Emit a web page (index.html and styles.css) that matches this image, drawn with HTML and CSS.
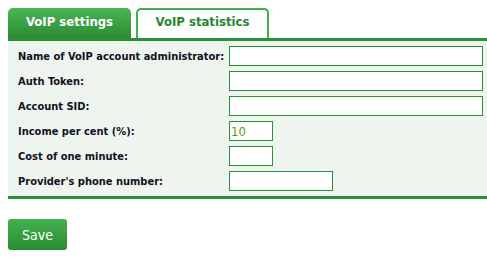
FILE: index.html
```html
<!DOCTYPE html>
<html lang="en">
<head>
  <meta charset="UTF-8" />
  <title>VoIP settings</title>
  <link rel="stylesheet" href="styles.css">
</head>
<body>

  <!-- TABS -->
  <div class="tabs">
    <div class="tab active">VoIP settings</div>
    <div class="tab">VoIP statistics</div>
  </div>

  <!-- SETTINGS FORM -->
  <div class="panel">
    <label class="row">
      <span class="label">Name of VoIP account administrator:</span>
      <input type="text" class="field wide">
    </label>
    <label class="row">
      <span class="label">Auth Token:</span>
      <input type="text" class="field wide">
    </label>
    <label class="row">
      <span class="label">Account SID:</span>
      <input type="text" class="field wide">
    </label>
    <label class="row">
      <span class="label">Income per cent (%):</span>
      <input type="text" class="field small" value="10">
    </label>
    <label class="row">
      <span class="label">Cost of one minute:</span>
      <input type="text" class="field small">
    </label>
    <label class="row">
      <span class="label">Provider's phone number:</span>
      <input type="text" class="field medium">
    </label>
  </div>

  <button class="save">Save</button>

</body>
</html>
```

FILE: styles.css
```css
body {
  margin: 8px 0 8px 8px;
  font-family: "DejaVu Sans Condensed", "DejaVu Sans", sans-serif;
  background: #fff;
}

/* TABS */
.tabs {
  display: flex;
  gap: 5px;
}

.tab {
  box-sizing: border-box;
  height: 30px;
  padding-top: 6px;
  text-align: center;
  font-size: 13px;
  font-weight: bold;
  border-radius: 5px 5px 0 0;
}

.tab.active {
  width: 123px;
  color: #fff;
  background: linear-gradient(#4bb554, #2a8c31);
}

.tab:not(.active) {
  width: 133px;
  color: #23882e;
  background: #fff;
  border: 2px solid #3fb04b;
  border-bottom: none;
  padding-top: 4px;
}

/* FORM PANEL */
.panel {
  background: #eef5ee;
  border-top: 3px solid #2a9136;
  border-bottom: 3px solid #2a9136;
  padding: 5px 4px 5px 10px;
  display: flex;
  flex-direction: column;
  gap: 5px;
}

.row {
  display: flex;
  align-items: center;
  height: 20px;
}

.label {
  width: 211px;
  flex: none;
  font-size: 11px;
  font-weight: bold;
  color: #111122;
}

.field {
  box-sizing: border-box;
  height: 20px;
  border: 1px solid #2a9136;
  background: #fff;
  padding: 0 1px;
  font-family: "DejaVu Sans Condensed", "DejaVu Sans", sans-serif;
  font-size: 13px;
  color: #5d9a2c;
  outline: none;
}

.wide { width: 254px; }
.small { width: 44px; }
.medium { width: 104px; }

/* SAVE BUTTON */
.save {
  margin-top: 20px;
  width: 59px;
  height: 31px;
  border: none;
  border-radius: 3px;
  background: linear-gradient(#43b04e, #2b8d33);
  color: #fff;
  font-family: "DejaVu Sans Condensed", "DejaVu Sans", sans-serif;
  font-size: 14px;
  cursor: pointer;
}
```
